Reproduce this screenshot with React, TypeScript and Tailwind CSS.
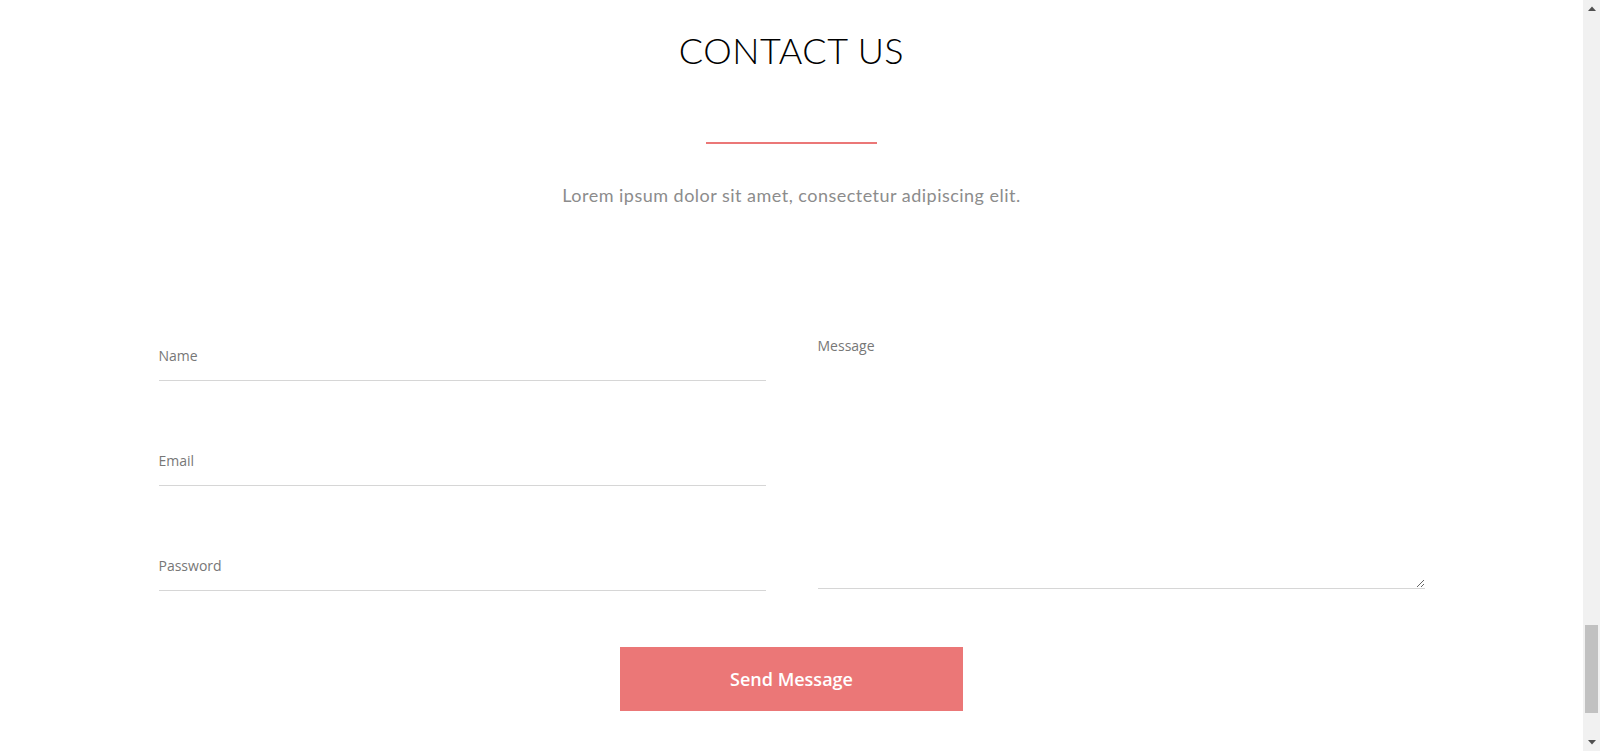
import type { ReactNode } from 'react'

const fieldClass =
  'block h-[35px] w-full border-0 border-b border-[#d6d6d6] bg-transparent p-0 pb-[15px] text-[14px] text-[#555] outline-none placeholder:text-[#777] font-["Open_Sans",sans-serif]'

export default function App() {
  return (
    <div className="flex h-[751px] w-full overflow-hidden bg-white">
      <main className="flex flex-1 flex-col items-center">
        <h1 className='pt-[28px] text-[36px] font-light leading-[44px] tracking-[0.5px] text-black font-["Lato",sans-serif]'>
          CONTACT US
        </h1>

        <div className="mt-[70px] h-[2px] w-[171px] bg-[#eb7777]" />

        <p className='mt-[39px] text-[18px] leading-[24px] tracking-[0.48px] text-[#8c8c8c] font-["Lato",sans-serif]'>
          Lorem ipsum dolor sit amet, consectetur adipiscing elit.
        </p>

        <form className="mt-[128px] flex flex-col items-center">
          <div className="grid w-[1266px] grid-cols-2 items-start gap-[52px]">
            <div className="flex flex-col gap-[70px] pt-[11px]">
              <Field>
                <input type="text" placeholder="Name" className={fieldClass} />
              </Field>
              <Field>
                <input type="email" placeholder="Email" className={fieldClass} />
              </Field>
              <Field>
                <input type="password" placeholder="Password" className={fieldClass} />
              </Field>
            </div>

            <textarea
              placeholder="Message"
              className='block h-[254px] w-full border-0 border-b border-[#d6d6d6] bg-transparent p-0 text-[14px] text-[#555] outline-none placeholder:text-[#777] font-["Open_Sans",sans-serif]'
            />
          </div>

          <button
            type="button"
            className='mt-[56px] h-[64px] w-[343px] bg-[#eb7777] text-[18px] font-semibold text-white font-["Open_Sans",sans-serif]'
          >
            Send Message
          </button>
        </form>
      </main>

      <div className="flex w-[17px] flex-col bg-[#f1f1f1]">
        <div className="flex h-[17px] items-center justify-center">
          <svg width="8" height="5" viewBox="0 0 8 5">
            <path d="M0 5 L4 0.5 L8 5 Z" fill="#505050" />
          </svg>
        </div>
        <div className="flex-1" />
        <div className="mx-[2px] h-[88px] bg-[#c1c1c1]" />
        <div className="h-[21px]" />
        <div className="flex h-[17px] items-center justify-center">
          <svg width="8" height="5" viewBox="0 0 8 5">
            <path d="M0 0 L8 0 L4 4.5 Z" fill="#505050" />
          </svg>
        </div>
      </div>
    </div>
  )
}

function Field({ children }: { children: ReactNode }) {
  return <label className="block">{children}</label>
}
